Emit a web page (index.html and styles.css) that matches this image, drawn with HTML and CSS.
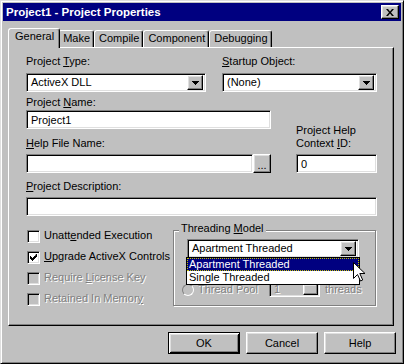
FILE: index.html
```html
<!DOCTYPE html>
<html>
<head>
<meta charset="utf-8">
<link rel="stylesheet" href="styles.css">
</head>
<body>
<div class="window">
  <div class="titlebar">
    <span class="title">Project1 - Project Properties</span>
    <span class="close raised"><svg width="8" height="7" viewBox="0 0 8 7"><path d="M0 0h2l2 2.4L6 0h2L5 3.5 8 7H6L4 4.6 2 7H0l3-3.5z"/></svg></span>
  </div>
  <div class="tabs">
    <div class="tab active">General</div>
    <div class="tab">Make</div>
    <div class="tab">Compile</div>
    <div class="tab">Component</div>
    <div class="tab">Debugging</div>
  </div>
  <div class="panel">
    <div class="content">
      <div class="row row1">
        <div class="field w-type">
          <div class="lbl">Project <u>T</u>ype:</div>
          <div class="combo sunken"><span class="val">ActiveX DLL</span><span class="cbtn raised"><svg class="arrow" width="7" height="4" viewBox="0 0 7 4"><path d="M0 0h7v1h-1v1h-1v1h-1v1h-1v-1h-1v-1h-1v-1h-1z"/></svg></span></div>
        </div>
        <div class="field w-startup">
          <div class="lbl"><u>S</u>tartup Object:</div>
          <div class="combo sunken"><span class="val">(None)</span><span class="cbtn raised"><svg class="arrow" width="7" height="4" viewBox="0 0 7 4"><path d="M0 0h7v1h-1v1h-1v1h-1v1h-1v-1h-1v-1h-1v-1h-1z"/></svg></span></div>
        </div>
      </div>
      <div class="row row23">
        <div class="leftcol">
          <div class="field name">
            <div class="lbl">Project <u>N</u>ame:</div>
            <div class="input sunken w-name">Project1</div>
          </div>
          <div class="field helpfile">
            <div class="lbl"><u>H</u>elp File Name:</div>
            <div class="inrow">
              <div class="input sunken w-help"></div>
              <div class="dots raised">...</div>
            </div>
          </div>
        </div>
        <div class="field ctx">
          <div class="lbl">Project Help<br>Context <u>I</u>D:</div>
          <div class="input sunken w-ctx">0</div>
        </div>
      </div>
      <div class="field desc">
        <div class="lbl"><u>P</u>roject Description:</div>
        <div class="input sunken w-desc"></div>
      </div>
      <div class="row row5">
        <div class="checks">
          <div class="chk"><span class="box"></span><span class="ctext">Unatt<u>e</u>nded Execution</span></div>
          <div class="chk"><span class="box"><svg width="7" height="7" viewBox="0 0 7 7"><path d="M6 0h1v3h-1v1h-1v1h-1v1h-1v1h-1v-1h-1v-1h-1v-3h1v1h1v1h1v-1h1v-1h1z"/></svg></span><span class="ctext"><u>U</u>pgrade ActiveX Controls</span></div>
          <div class="chk disabled"><span class="box"></span><span class="ctext">Require <u>L</u>icense Key</span></div>
          <div class="chk disabled"><span class="box"></span><span class="ctext">Retained In Memor<u>y</u></span></div>
        </div>
        <fieldset class="group">
          <legend>Threading <u>M</u>odel</legend>
          <div class="combo-wrap">
            <div class="combo sunken w-thread"><span class="val">Apartment Threaded</span><span class="cbtn raised"><svg class="arrow" width="7" height="4" viewBox="0 0 7 4"><path d="M0 0h7v1h-1v1h-1v1h-1v1h-1v-1h-1v-1h-1v-1h-1z"/></svg></span></div>
            <div class="droplist">
              <div class="item selected">Apartment Threaded</div>
              <div class="item">Single Threaded</div>
            </div>
            <svg class="cursor" width="13" height="20" viewBox="0 0 13 20"><path d="M0.5 0.5V16.5L4.5 12.5L7.5 19L9.7 18L6.8 11.5H12Z" fill="#fff" stroke="#000" stroke-width="1"/></svg>
          </div>
          <div class="pool disabled">
            <span class="radio"></span>
            <span class="ptext">Thread Pool</span>
            <span class="spin sunken"><span class="sval">1</span><span class="sbtn raised"></span></span>
            <span class="ptext">threads</span>
          </div>
        </fieldset>
      </div>
    </div>
  </div>
  <div class="buttons">
    <div class="btn default">OK</div>
    <div class="btn raised">Cancel</div>
    <div class="btn raised">Help</div>
  </div>
</div>
</body>
</html>
```
FILE: styles.css
```css
* { box-sizing: border-box; }
html, body { margin: 0; padding: 0; }
body {
  width: 404px; height: 364px; overflow: hidden;
  background: #c0c0c0;
  font-family: "Liberation Sans", Arial, sans-serif;
  font-size: 11px; line-height: 13px; color: #000;
}
u { text-decoration: underline; text-underline-offset: 1px; }

.raised {
  background: #c0c0c0;
  border: 1px solid; border-color: #fff #000 #000 #fff;
  box-shadow: inset -1px -1px #808080, inset 1px 1px #dfdfdf;
}
.sunken {
  background: #fff;
  border: 1px solid; border-color: #808080 #fff #fff #808080;
  box-shadow: inset 1px 1px #000, inset -1px -1px #dfdfdf;
}

.window {
  width: 404px; height: 364px;
  background: #c0c0c0;
  border: 1px solid; border-color: #dfdfdf #000 #000 #dfdfdf;
  box-shadow: inset 1px 1px #fff, inset -1px -1px #808080;
  padding: 2px;
  display: flex; flex-direction: column;
}
.titlebar {
  flex: none; height: 18px;
  background: #000080; color: #fff;
  display: flex; align-items: center; justify-content: space-between;
  padding: 0 2px 0 3px;
}
.title { font-weight: bold; font-size: 11.5px; }
.close {
  width: 18px; height: 14px;
  display: flex; align-items: center; justify-content: center;
}

.tabs {
  flex: none; height: 20px; margin-top: 7px; padding-left: 7px;
  display: flex; align-items: flex-end;
}
.tab {
  height: 17px; margin-bottom: 1px;
  padding: 1px 3px 0 4px;
  border: 1px solid; border-bottom: 0;
  border-color: #fff #000 transparent #fff;
  border-radius: 3px 3px 0 0;
  box-shadow: inset -1px 0 #808080;
  background: #c0c0c0;
  white-space: nowrap;
}
.tab.active {
  height: 20px; margin: 0 -2px; padding-left: 6px; padding-right: 5px;
  position: relative; z-index: 2;
}

.panel {
  flex: none; position: relative; z-index: 1;
  margin: -1px 7px 0 5px; height: 279px;
  border: 1px solid; border-color: #fff #000 #000 #fff;
  box-shadow: inset -1px -1px #808080;
  padding: 7px 0 0 17px;
}
.content { width: 351px; display: flex; flex-direction: column; }
.row { display: flex; justify-content: space-between; }
.field { display: flex; flex-direction: column; }
.lbl { white-space: nowrap; }

.row1 .lbl { margin-bottom: 5px; }
.w-type { width: 180px; }
.w-startup { width: 155px; }

.combo {
  height: 19px; padding: 2px;
  display: flex; align-items: center;
}
.combo .val { flex: 1; padding-left: 2px; white-space: nowrap; overflow: hidden; }
.cbtn {
  width: 16px; height: 15px; flex: none;
  display: flex; align-items: center; justify-content: center;
}

.row23 { margin-top: 4px; align-items: flex-end; }
.leftcol { width: 245px; display: flex; flex-direction: column; }
.name .lbl { margin-bottom: 1px; }
.input { height: 19px; padding: 2px 0 0 4px; line-height: 14px; white-space: nowrap; }
.w-name { width: 245px; }
.helpfile { margin-top: 8px; }
.helpfile .lbl, .ctx .lbl { margin-bottom: 4px; }
.inrow { display: flex; }
.w-help { width: 227px; }
.dots {
  width: 18px; height: 19px;
  display: flex; align-items: flex-end; justify-content: center;
  padding-bottom: 3px; line-height: 8px;
}
.ctx { width: 81px; }
.w-ctx { width: 81px; }

.desc { margin-top: 7px; }
.desc .lbl { margin-bottom: 4px; }
.w-desc { width: 351px; }

.row5 { margin-top: 6px; justify-content: flex-start; }
.checks { width: 147px; padding-top: 7px; display: flex; flex-direction: column; }
.chk { height: 21px; display: flex; align-items: flex-start; padding-left: 1px; white-space: nowrap; }
.box {
  width: 13px; height: 13px; margin-top: 1px; flex: none;
  background: #fff;
  border: 1px solid; border-color: #808080 #fff #fff #808080;
  box-shadow: inset 1px 1px #000, inset -1px -1px #dfdfdf;
  display: flex; align-items: center; justify-content: center;
}
.ctext { margin-left: 4px; margin-top: 0; }
.disabled .box { background: #c0c0c0; }
.disabled .ctext, .disabled .ptext, .disabled .sval {
  color: #808080; text-shadow: 1px 1px #fff;
}

.group {
  width: 203px; height: 84px; margin: 0;
  padding: 0 8px 0 5px;
  border: 1px solid #808080;
  box-shadow: inset 1px 1px #fff, 1px 1px #fff;
  position: relative;
}
.group legend { padding: 0 2px 4px; line-height: 13px; background: #c0c0c0; }
.combo-wrap { position: relative; margin: 0 0 0 8px; width: 172px; }
.w-thread { width: 172px; }
.droplist {
  position: absolute; left: -1px; top: 18px; width: 174px; z-index: 3;
  background: #fff; border: 1px solid #000;
}
.item { height: 13px; line-height: 13px; padding-left: 2px; white-space: nowrap; }
.item.selected { background: #000080; color: #fff; outline: 1px dotted #c0c000; outline-offset: -1px; }
.cursor { position: absolute; left: 166px; top: 23px; z-index: 4; }

.pool { margin: 24px 0 0 3px; height: 15px; display: flex; align-items: center; }
.radio {
  width: 12px; height: 12px; border-radius: 50%; flex: none;
  border: 1px solid; border-color: #808080 #fff #fff #808080;
  background: #c0c0c0;
}
.pool .ptext:nth-of-type(2) { margin-left: 4px; width: 71px; }
.spin {
  width: 51px; height: 15px; background: #c0c0c0; padding: 1px;
  display: flex; align-items: center;
}
.sval { flex: 1; padding-left: 3px; }
.sbtn { width: 15px; height: 11px; }
.pool .ptext:last-child { margin-left: 5px; }

.buttons {
  flex: none; margin-top: 6px; padding-right: 5px;
  display: flex; justify-content: flex-end; gap: 6px;
}
.btn {
  width: 72px; height: 22px;
  display: flex; align-items: center; justify-content: center;
}
.btn.default {
  background: #c0c0c0;
  border: 1px solid #000;
  box-shadow: inset 1px 1px #fff, inset -1px -1px #000, inset 2px 2px #dfdfdf, inset -2px -2px #808080;
}
```
